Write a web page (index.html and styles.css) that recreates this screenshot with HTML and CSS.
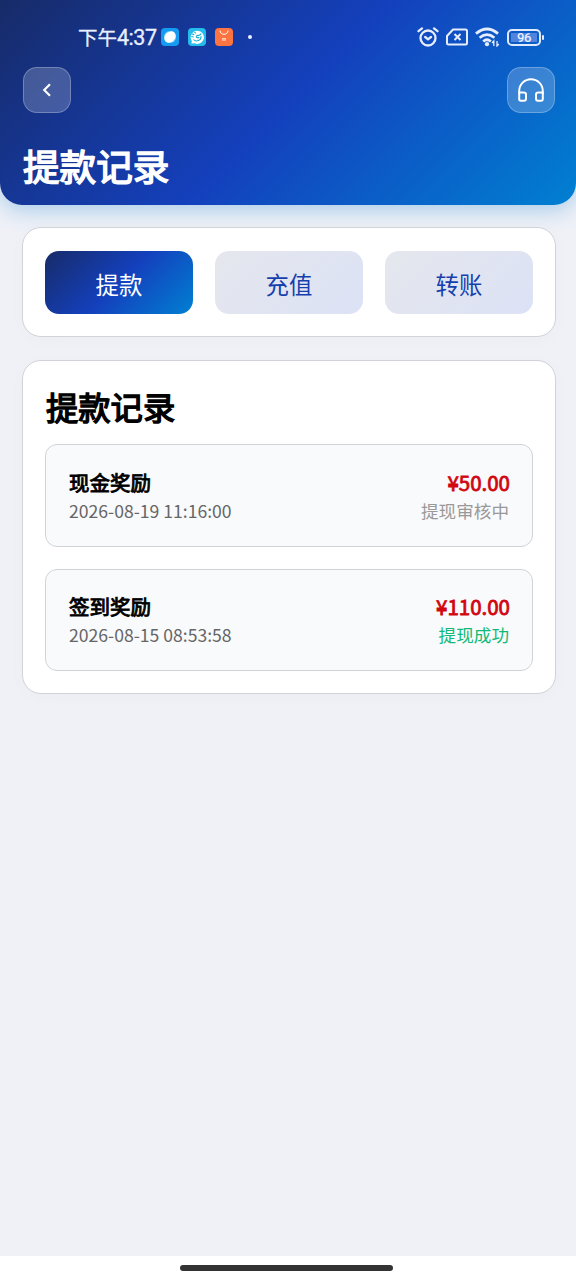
FILE: index.html
```html
<!DOCTYPE html>
<html lang="zh-CN">
<head>
<meta charset="utf-8">
<meta name="viewport" content="width=device-width">
<title>提款记录</title>
<link rel="stylesheet" href="styles.css">
</head>
<body>
<header class="header">
  <div class="status">
    <span class="time">下午<span class="digits">4:37</span></span>
    <svg class="app" viewBox="0 0 18 18"><rect width="18" height="18" rx="4" fill="#159cf2"/><circle cx="9" cy="9" r="6" fill="#8bd5ff"/><ellipse cx="9" cy="9" rx="6.2" ry="5" transform="rotate(-45 9 9)" fill="#fff"/></svg>
    <svg class="app" viewBox="0 0 18 18"><rect width="18" height="18" rx="4" fill="#24bdeb"/><path d="M3.500 15.500l.3-2.500a6.600 6.600 0 1 1 2.700 2.300z" fill="#fff"/><path d="M3.800 6l2.400.6M3.300 8.500l2.400.5M6.500 4l1.200 1.300M8.300 9q0-1.700 2-1.600 2 0 3-2M5.500 11.500c2.500 3 8 1 7.600-3.200M8.300 9q1.500 1.500 3 .3" fill="none" stroke="#17aed0" stroke-width="1.100"/></svg>
    <svg class="app" viewBox="0 0 18 18"><rect width="18" height="18" rx="4" fill="#ff7440"/><path d="M5 2.500c0 5 8 5 8 0" fill="none" stroke="#fff" stroke-width="1"/><path d="M7 10.700h4M7 12h4" stroke="#ffe3d8" stroke-width="1"/></svg>
    <span class="dot"></span>
    <span class="system">
      <svg width="22" height="20" viewBox="0 0 22 20" fill="none" stroke="#e6edff" stroke-width="2.300" stroke-linecap="round"><circle cx="11" cy="11" r="7.500"/><path d="M1.500 4.200L5 1.400M20.500 4.200L17 1.400M8.200 10l2.800 2.300 3-2.300"/></svg>
      <svg width="22" height="18" viewBox="0 0 22 18" fill="none" stroke="#e6edff" stroke-width="2" stroke-linejoin="round"><path d="M7 1.500H19.500q1.500 0 1.500 1.500v12q0 1.500-1.500 1.500H2.500Q1 16.500 1 15V8z"/><path d="M8.500 6l6 6M14.500 6l-6 6" stroke-width="2"/></svg>
      <svg width="25" height="20" viewBox="0 0 25 20" fill="none" stroke="#e6edff" stroke-width="2.700"><path d="M1 6.600Q12 -2.600 23 6.600M4.600 10.700Q12 4.500 19.400 10.700M8.200 14.500Q12 11 15.800 14.500"/><circle cx="12" cy="17.200" r="2.100" fill="#e6edff" stroke="none"/><path d="M18.800 19v-5l-1.800 2M22 14v5l1.800-2" stroke-width="1.300"/></svg>
      <span class="battery"><span class="level">96</span></span>
    </span>
  </div>
  <div class="actions">
    <button class="icon-button" aria-label="返回"><svg width="12" height="16" viewBox="0 0 12 16" fill="none" stroke="#fff" stroke-width="2.200"><path d="M9 2.200L3.200 8 9 13.800"/></svg></button>
    <button class="icon-button" aria-label="客服"><svg width="28" height="28" viewBox="0 0 28 28" fill="none" stroke="#fff" stroke-width="2" stroke-linejoin="round"><path d="M2.200 17V15a11.800 11.800 0 0 1 23.600 0v3"/><path d="M2.200 16.500h4.500q2.300 0 2.300 2v4.300q0 2-2 2H3.900q-1.700 0-1.700-1.700zM25.800 16.500h-4.500q-2.300 0-2.300 2v4.300q0 2 2 2h3.100q1.700 0 1.700-1.700z"/></svg></button>
  </div>
  <h1 class="title">提款记录</h1>
</header>
<main class="content">
  <nav class="card tabs">
    <button class="tab active">提款</button><button class="tab">充值</button><button class="tab">转账</button>
  </nav>
  <section class="card records">
    <h2 class="section-title">提款记录</h2>
    <div class="list">
      <article class="record">
        <div><div class="name">现金奖励</div><div class="date">2026-08-19 11:16:00</div></div>
        <div class="right"><div class="amount">¥50.00</div><div class="state">提现审核中</div></div>
      </article>
      <article class="record">
        <div><div class="name">签到奖励</div><div class="date">2026-08-15 08:53:58</div></div>
        <div class="right"><div class="amount">¥110.00</div><div class="state success">提现成功</div></div>
      </article>
    </div>
  </section>
</main>
<footer class="system-nav"><span class="handle"></span></footer>
</body>
</html>
```
FILE: styles.css
```css
* { box-sizing: border-box; }
body {
  margin: 0;
  height: 1280px;
  display: flex;
  flex-direction: column;
  overflow: hidden;
  background: #eff1f7;
  color: #000;
  font-family: "Noto Sans CJK SC", sans-serif;
}
button { font: inherit; margin: 0; padding: 0; }
.header {
  height: 205px;
  flex: none;
  background: linear-gradient(135deg, #172b68 0%, #1440bd 50%, #0080d2 100%);
  border-radius: 0 0 22px 22px;
  box-shadow: 0 5px 22px rgba(0, 120, 205, .3);
}
.status {
  height: 67px;
  padding: 7px 32px 0 78px;
  display: flex;
  align-items: center;
  color: #e8efff;
}
.time { width: 83px; font-size: 19.500px; line-height: 28px; white-space: nowrap; -webkit-text-stroke: .3px currentColor; }
.digits { font-family: Roboto, sans-serif; font-size: 21.500px; letter-spacing: -.5px; }
.app { width: 18px; height: 18px; margin-right: 9px; flex: none; }
.dot { width: 4px; height: 4px; border-radius: 50%; background: #e8efff; margin-left: 6px; }
.system { margin-left: auto; display: flex; align-items: center; gap: 7px; }
.battery {
  position: relative;
  width: 34px;
  height: 17px;
  padding: 2px;
  border: 2px solid #e0ebff;
  border-radius: 5px;
  margin-right: 3px;
}
.battery::after { content: ""; position: absolute; right: -5px; top: 4px; width: 2px; height: 5px; border-radius: 1px; background: #e0ebff; }
.level { display: block; height: 9px; background: #4f83de; font: 500 13px/10px Roboto, sans-serif; letter-spacing: -.3px; text-align: center; }
.actions { height: 46px; padding: 0 21px 0 23px; display: flex; justify-content: space-between; }
.icon-button {
  width: 48px;
  height: 46px;
  display: grid;
  place-items: center;
  border: 1px solid rgba(255, 255, 255, .25);
  border-radius: 14px;
  background: rgba(255, 255, 255, .2);
}
.title { margin: 26px 0 0 23px; font-size: 36.600px; line-height: 54px; font-weight: 400; -webkit-text-stroke: 1.500px currentColor; color: #fff; }
.content { flex: 1; padding: 22px 20px 0 22px; display: flex; flex-direction: column; gap: 23px; }
.card { background: #fff; border: 1px solid #d1d3d9; border-radius: 19px; box-shadow: 0 3px 20px rgba(0, 0, 0, .02); }
.tabs { height: 110px; padding: 23px 22px; display: grid; grid-template-columns: repeat(3, 1fr); gap: 22px; }
.tab {
  height: 63px;
  border: 0;
  padding-top: 3px;
  border-radius: 14px;
  background: linear-gradient(135deg, #e5e7ed, #dce2f6);
  color: #163fae;
  font-size: 23.400px;
  line-height: 60px;
}
.active { background: linear-gradient(135deg, #172b68 0%, #1440bd 50%, #0080d2 100%); color: #fff; }
.records { height: 334px; padding: 21px 22px; }
.section-title { margin: 0 0 0 1px; font-size: 32.300px; line-height: 48px; font-weight: 400; -webkit-text-stroke: 1.400px currentColor; }
.list { margin-top: 14px; display: flex; flex-direction: column; gap: 22px; }
.record {
  height: 102px;
  padding: 22px 22px 22px 23px;
  display: flex;
  justify-content: space-between;
  border: 1px solid #d1d3d8;
  border-radius: 12px;
  background: #f9fafc;
}
.record:first-child { height: 103px; }
.name { font-size: 20.500px; line-height: 31px; font-weight: 400; -webkit-text-stroke: .9px currentColor; }
.date { font-size: 17.600px; line-height: 26px; color: #666; }
.right { text-align: right; }
.amount { font-size: 20.500px; line-height: 30px; color: #d1060f; -webkit-text-stroke: .8px currentColor; }
.state { padding-right: 1px; font-size: 17.600px; line-height: 27px; color: #999; }
.success { color: #12b976; }
.record + .record { padding-top: 21px; }
.system-nav { height: 24px; flex: none; display: flex; align-items: center; justify-content: center; background: #fff; }
.handle { width: 213px; height: 6px; margin-right: 4px; border-radius: 3px; background: #333; }
```
